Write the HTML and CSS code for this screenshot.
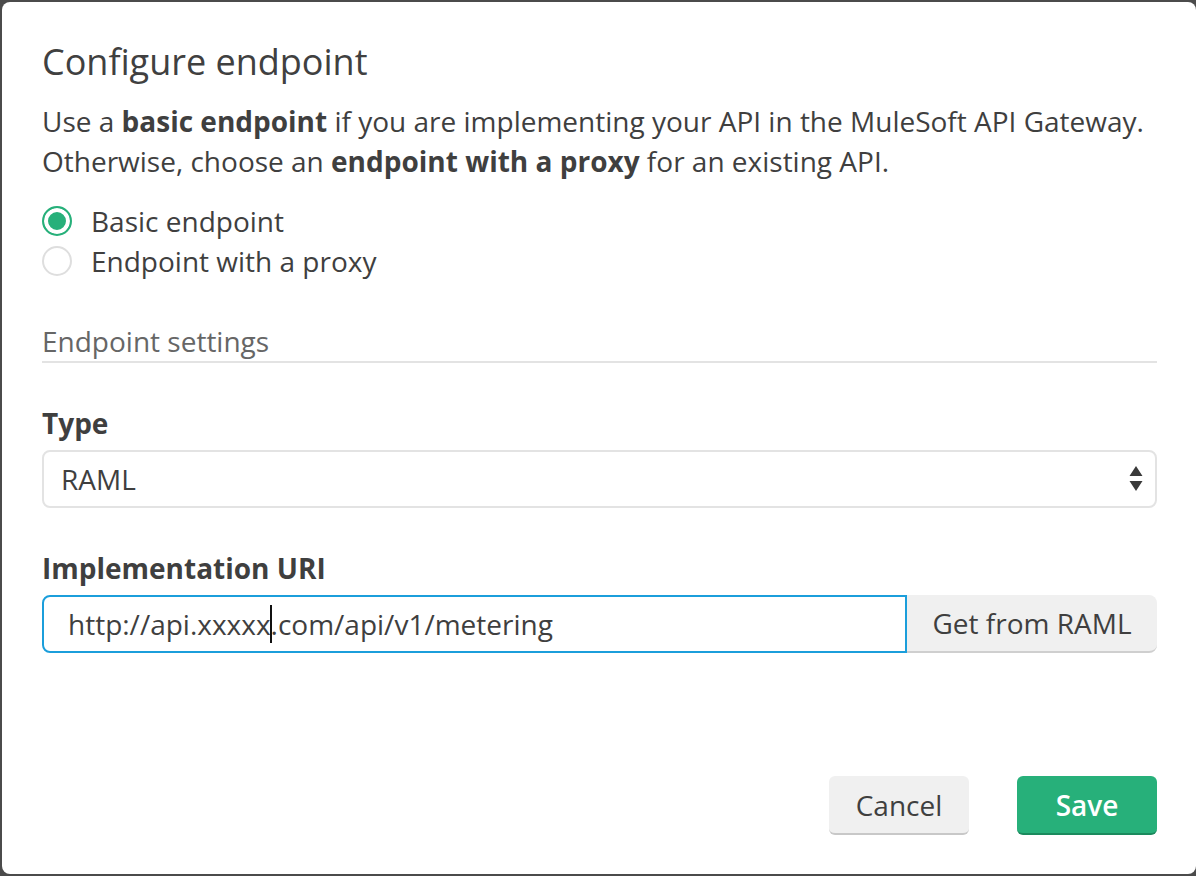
FILE: index.html
```html
<!DOCTYPE html>
<html>
<head>
<meta charset="utf-8">
<link rel="stylesheet" href="styles.css">
</head>
<body>
<div class="dialog">
  <h1 class="title">Configure endpoint</h1>
  <p class="desc">Use a <b>basic endpoint</b> if you are implementing your API in the MuleSoft API Gateway.<br>Otherwise, choose an <b>endpoint with a proxy</b> for an existing API.</p>
  <div class="radios">
    <div class="radio"><span class="dot checked"></span><span>Basic endpoint</span></div>
    <div class="radio"><span class="dot"></span><span>Endpoint with a proxy</span></div>
  </div>
  <div class="section">Endpoint settings</div>
  <div class="field">
    <div class="label">Type</div>
    <div class="select">
      <span>RAML</span>
      <svg class="arrows" width="14" height="26" viewBox="0 0 14 26"><path d="M7 0 L13.5 10 L0.5 10 Z M0.5 15 L13.5 15 L7 25 Z" fill="#3a3a3a"/></svg>
    </div>
  </div>
  <div class="field">
    <div class="label">Implementation URI</div>
    <div class="input-group">
      <div class="input">http://api.xxxxx<span class="caret"></span>.com/api/v1/metering</div>
      <div class="addon">Get from RAML</div>
    </div>
  </div>
  <div class="footer">
    <button class="btn btn-default">Cancel</button>
    <button class="btn btn-primary">Save</button>
  </div>
</div>
</body>
</html>
```
FILE: styles.css
```css
html, body {
  margin: 0;
  height: 100%;
}
body {
  background: #4b4b4b;
  padding: 2px 0 2px 2px;
  box-sizing: border-box;
  overflow: hidden;
  font-family: "Open Sans", "Liberation Sans", sans-serif;
  color: #3f3f3f;
}
.dialog {
  background: #fff;
  width: 1194px;
  height: 872px;
  border-radius: 8px;
  box-sizing: border-box;
  padding: 0 39px 39px 40px;
  display: flex;
  flex-direction: column;
}
.title {
  font-size: 36px;
  font-weight: 400;
  line-height: 40px;
  margin: 40px 0 0 0;
  color: #404040;
}
.desc {
  font-size: 28px;
  line-height: 40px;
  margin: 19px 0 0 0;
}
.desc b { font-weight: 700; }
.radios {
  margin-top: 20px;
  display: flex;
  flex-direction: column;
}
.radio {
  display: flex;
  align-items: center;
  height: 40px;
  font-size: 28px;
}
.dot {
  width: 30px;
  height: 30px;
  box-sizing: border-box;
  border-radius: 50%;
  border: 2px solid #dedede;
  margin-right: 19px;
  flex: none;
}
.dot.checked {
  border-color: #27b07a;
  background: #27b07a;
  box-shadow: inset 0 0 0 4px #fff;
}
.section {
  margin-top: 40px;
  font-size: 28px;
  line-height: 40px;
  color: #666;
  padding-bottom: 0;
  border-bottom: 2px solid #e3e3e3;
}
.field { margin-top: 40px; }
.label {
  font-size: 28px;
  font-weight: 700;
  line-height: 40px;
  margin-bottom: 7px;
}
.select {
  height: 58px;
  box-sizing: border-box;
  border: 2px solid #e3e3e3;
  border-radius: 8px;
  display: flex;
  align-items: center;
  justify-content: space-between;
  padding: 0 12px 0 17px;
  font-size: 28px;
}
.arrows { display: block; }
.input-group {
  display: flex;
  height: 58px;
}
.input {
  flex: 1;
  border: 2px solid #1b9edb;
  border-radius: 8px 0 0 8px;
  display: flex;
  align-items: center;
  padding-left: 24px;
  font-size: 28px;
  box-sizing: border-box;
}
.caret {
  display: inline-block;
  width: 2px;
  height: 38px;
  background: #111;
  margin: 0 -1px;
}
.addon {
  width: 250px;
  background: #f0f0f0;
  border-radius: 0 8px 8px 0;
  border-bottom: 2px solid #cfcfcf;
  box-sizing: border-box;
  display: flex;
  align-items: center;
  justify-content: center;
  font-size: 28px;
}
.footer {
  margin-top: auto;
  display: flex;
  justify-content: flex-end;
  gap: 48px;
}
.btn {
  width: 140px;
  height: 59px;
  border: none;
  border-radius: 6px;
  font-family: "Open Sans", "Liberation Sans", sans-serif;
  font-size: 28px;
  padding: 0;
  box-sizing: border-box;
}
.btn-default {
  background: #f0f0f0;
  color: #3f3f3f;
  border-bottom: 2px solid #c8c8c8;
}
.btn-primary {
  background: #27b07a;
  color: #fff;
  font-weight: 600;
  border-bottom: 2px solid #1b8a5d;
}
```
